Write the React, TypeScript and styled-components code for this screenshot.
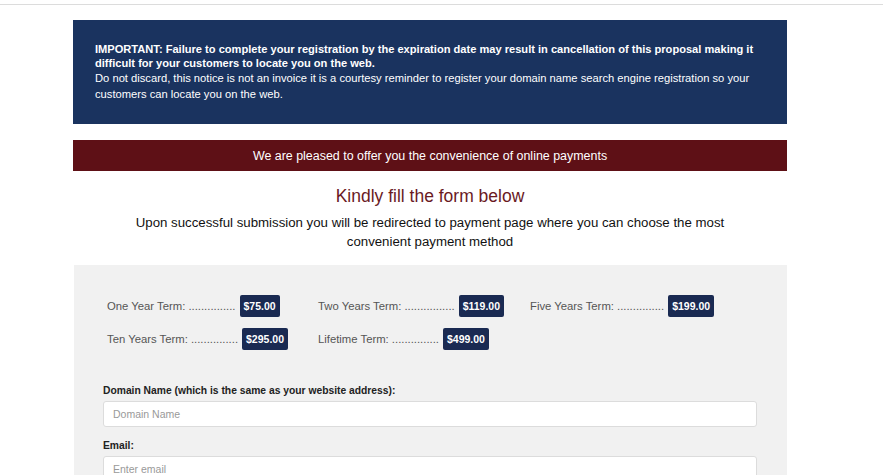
import React from "react";
import styled, { createGlobalStyle } from "styled-components";

const Global = createGlobalStyle`
  html, body { margin: 0; padding: 0; background: #fff; }
  body { font-family: "Liberation Sans", Arial, sans-serif; }
  * { box-sizing: border-box; }
`;

const TopBar = styled.div`
  height: 5px;
  border-bottom: 1px solid #dcdcdc;
`;

const Page = styled.div`
  width: 714px;
  margin-left: 73px;
  padding-top: 15px;
`;

const Notice = styled.div`
  background: #1a335f;
  color: #fff;
  padding: 22px 22px 22px 22px;
  font-size: 11.1px;
`;

const NoticeStrong = styled.p`
  margin: 0;
  font-weight: bold;
  line-height: 14px;
`;

const NoticeText = styled.p`
  margin: 0;
  line-height: 16px;
  font-size: 11.2px;
`;

const OfferBar = styled.div`
  margin-top: 16px;
  background: #5e1016;
  color: #fff;
  height: 31px;
  display: flex;
  align-items: center;
  justify-content: center;
  font-size: 12.45px;
`;

const Title = styled.h2`
  margin: 14px 0 0 0;
  text-align: center;
  font-weight: normal;
  font-size: 17.5px;
  line-height: 22px;
  color: #6a1a1f;
`;

const Subtitle = styled.p`
  margin: 6px auto 0 auto;
  max-width: 600px;
  text-align: center;
  font-size: 13.25px;
  line-height: 19px;
  color: #111;
`;

const Panel = styled.div`
  margin-top: 14px;
  margin-left: 1px;
  background: #f1f1f1;
  padding: 30px 30px 20px 29px;
`;

const Prices = styled.div`
  display: grid;
  grid-template-columns: 211px 212px 1fr;
  row-gap: 11px;
  padding-left: 4px;
`;

const PriceItem = styled.div`
  display: flex;
  align-items: center;
  height: 22px;
  font-size: 11.3px;
  color: #555;
`;

const Badge = styled.span`
  margin-left: 4px;
  background: #1a2a52;
  color: #fff;
  font-weight: bold;
  font-size: 10.5px;
  height: 22px;
  padding: 0 4px;
  border-radius: 2px;
  display: inline-flex;
  align-items: center;
`;

const Field = styled.div<{ $first?: boolean }>`
  margin-top: ${(p) => (p.$first ? "34px" : "12px")};
`;

const Label = styled.label`
  display: block;
  font-size: 10.3px;
  font-weight: bold;
  color: #222;
  line-height: 13px;
  margin-bottom: 4px;
`;

const Input = styled.input`
  display: block;
  width: 100%;
  height: 26px;
  border: 1px solid #dcdcdc;
  border-radius: 3px;
  background: #fff;
  padding: 0 9px;
  font-family: "Liberation Sans Narrow", "Liberation Sans", Arial, sans-serif;
  font-size: 10.5px;
  outline: none;
  &::placeholder { color: #999; }
`;

const prices = [
  { label: "One Year Term: ...............", price: "$75.00" },
  { label: "Two Years Term: ................", price: "$119.00" },
  { label: "Five Years Term: ...............", price: "$199.00" },
  { label: "Ten Years Term: ...............", price: "$295.00" },
  { label: "Lifetime Term: ...............", price: "$499.00" },
];

export default function App() {
  return (
    <>
      <Global />
      <TopBar />
      <Page>
        <Notice>
          <NoticeStrong>
            IMPORTANT: Failure to complete your registration by the expiration date may result in cancellation of this proposal making it difficult for your customers to locate you on the web.
          </NoticeStrong>
          <NoticeText>
            Do not discard, this notice is not an invoice it is a courtesy reminder to register your domain name search engine registration so your customers can locate you on the web.
          </NoticeText>
        </Notice>
        <OfferBar>We are pleased to offer you the convenience of online payments</OfferBar>
        <Title>Kindly fill the form below</Title>
        <Subtitle>
          Upon successful submission you will be redirected to payment page where you can choose the most convenient payment method
        </Subtitle>
        <Panel>
          <Prices>
            {prices.map((p) => (
              <PriceItem key={p.price}>
                {p.label}
                <Badge>{p.price}</Badge>
              </PriceItem>
            ))}
          </Prices>
          <Field $first>
            <Label>Domain Name (which is the same as your website address):</Label>
            <Input placeholder="Domain Name" />
          </Field>
          <Field>
            <Label>Email:</Label>
            <Input placeholder="Enter email" />
          </Field>
        </Panel>
      </Page>
    </>
  );
}
